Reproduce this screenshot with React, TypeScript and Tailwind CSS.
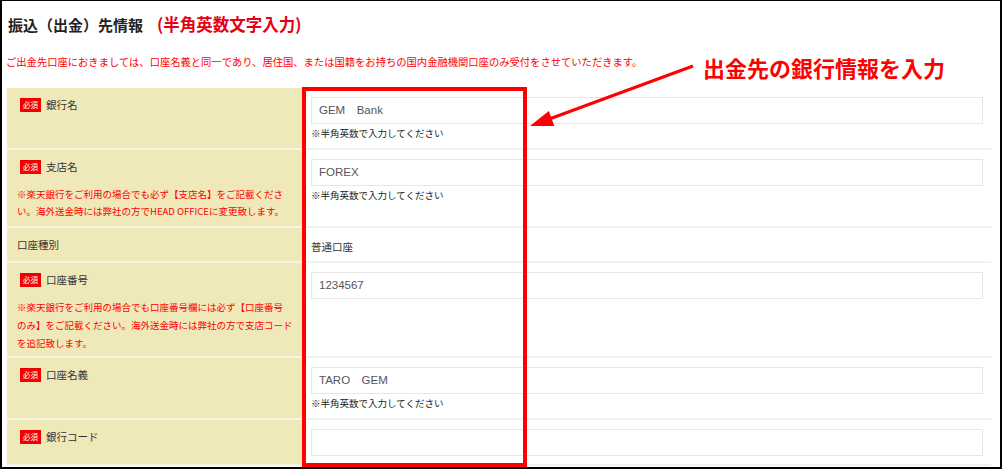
import React from "react";

const jp = "font-['Noto_Sans_CJK_JP',sans-serif]";

type Row = {
  label: string;
  required?: boolean;
  note?: React.ReactNode;
  value?: string;
  input?: boolean;
  hint?: boolean;
  text?: string;
  height: string;
};

const rows: Row[] = [
  { label: "銀行名", required: true, input: true, value: "GEM　Bank", hint: true, height: "h-[62px]" },
  {
    label: "支店名",
    required: true,
    input: true,
    value: "FOREX",
    hint: true,
    height: "h-[78px]",
    note: (
      <>
        ※楽天銀行をご利用の場合でも必ず【支店名】をご記載くださ
        <br />
        い。海外送金時には弊社の方でHEAD OFFICEに変更致します。
      </>
    ),
  },
  { label: "口座種別", text: "普通口座", height: "h-[35px]" },
  {
    label: "口座番号",
    required: true,
    input: true,
    value: "1234567",
    height: "h-[95px]",
    note: (
      <>
        ※楽天銀行をご利用の場合でも口座番号欄には必ず【口座番号
        <br />
        のみ】をご記載ください。海外送金時には弊社の方で支店コード
        <br />
        を追記致します。
      </>
    ),
  },
  { label: "口座名義", required: true, input: true, value: "TARO　GEM", hint: true, height: "h-[62px]" },
  { label: "銀行コード", required: true, input: true, value: "", height: "h-[46px]" },
];

function Badge() {
  return (
    <span className="ml-[3px] mr-[5px] inline-flex h-[14px] items-center bg-[#f20000] px-[3px] text-[7.5px] leading-none text-white">
      必須
    </span>
  );
}

export default function App() {
  return (
    <div className={`relative h-[469px] w-[1002px] overflow-hidden border-b-2 border-l-2 border-r-2 border-t border-black bg-white ${jp}`}>
      <h2 className="mt-[11px] flex h-[24px] items-baseline pl-[6px] font-bold leading-[24px] text-[#222]">
        <span className="w-[149px] whitespace-nowrap text-[15px]">振込（出金）先情報</span>
        <span className="whitespace-nowrap text-[16.5px] text-[#e60012]">(半角英数文字入力)</span>
      </h2>

      <p className="mt-[18px] whitespace-nowrap pl-[4px] text-[10.3px] leading-[16px] text-[#f00]">
        ご出金先口座におきましては、口座名義と同一であり、居住国、または国籍をお持ちの国内金融機関口座のみ受付をさせていただきます。
      </p>

      <div className="ml-[5px] mt-[18px] w-[984px]">
        {rows.map((row) => (
          <div key={row.label} className={`grid grid-cols-[295px_1fr] ${row.height}`}>
            <div className="border-b-2 border-[#f7f3de] bg-[#efe8b9] pl-[10px] pr-1 pt-[10px]">
              <div className="flex h-[14px] items-center text-[10.5px] text-[#333]">
                {row.required && <Badge />}
                {row.label}
              </div>
              {row.note && (
                <p
                  className={`whitespace-nowrap text-[9.5px] text-[#f00] ${
                    row.label === "支店名" ? "mt-[12px] leading-[17px]" : "mt-[11px] leading-[18px]"
                  }`}
                >
                  {row.note}
                </p>
              )}
            </div>
            <div className="border-b-2 border-[#f1f1f1] pl-[9px] pr-[8px] pt-[9px]">
              {row.input && (
                <div className="flex h-[27px] items-center border border-[#e6e6e6] px-[7px] font-['Liberation_Sans','Noto_Sans_CJK_JP',sans-serif] text-[11.5px] text-[#555]">
                  {row.value}
                </div>
              )}
              {row.hint && (
                <p className="mt-[2px] text-[9.5px] leading-[14px] text-[#222]">※半角英数で入力してください</p>
              )}
              {row.text && <p className="pt-px text-[10.5px] leading-[18px] text-[#333]">{row.text}</p>}
            </div>
          </div>
        ))}
      </div>

      {/* annotation */}
      <div className="pointer-events-none absolute left-[300px] top-[86px] h-[380px] w-[225px] border-4 border-[#ff0000]" />
      <p className="absolute left-[701px] top-[52px] whitespace-nowrap text-[22px] font-bold leading-[28px] text-[#f00]">
        出金先の銀行情報を入力
      </p>
      <svg className="pointer-events-none absolute left-[-2px] top-[-1px]" width="1002" height="469" viewBox="0 0 1002 469">
        <line x1="693" y1="66" x2="548" y2="119.5" stroke="#ff0000" strokeWidth="3" />
        <polygon points="530,126 548.8,110.9 554.4,125.9" fill="#ff0000" />
      </svg>
    </div>
  );
}
